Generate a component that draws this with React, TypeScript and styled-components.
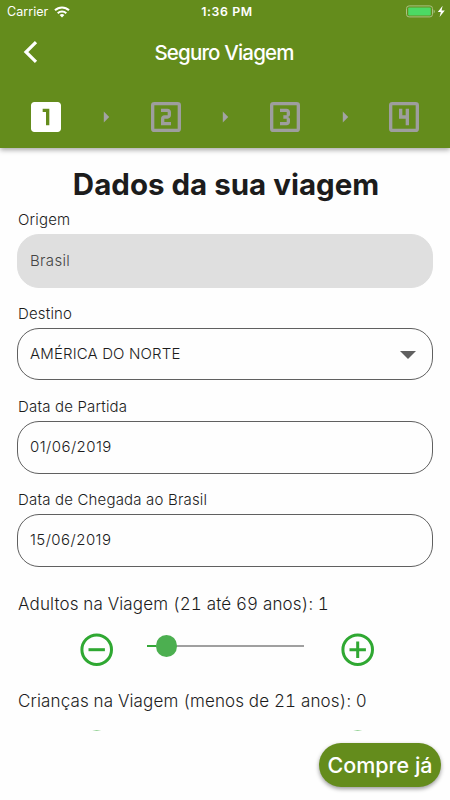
import React from "react";
import styled, { createGlobalStyle } from "styled-components";

const GREEN = "#648c1c";

const GlobalStyle = createGlobalStyle`
  *, *::before, *::after { box-sizing: border-box; }
  body { margin: 0; background: #fefefe; }
  svg { display: block; flex: none; }
`;

const Screen = styled.div`
  display: flex;
  flex-direction: column;
  width: 450px;
  height: 800px;
  overflow: hidden;
  background: #fefefe;
  color: #1c1c1c;
  font-family: Inter, "Liberation Sans", sans-serif;
`;

const Header = styled.header`
  flex: none;
  height: 148px;
  background: ${GREEN};
  color: #fff;
  box-shadow: 0 2px 5px rgba(0, 0, 0, 0.35);
  z-index: 1;
`;

const StatusBar = styled.div`
  display: grid;
  grid-template-columns: 1fr auto 1fr;
  align-items: center;
  height: 23px;
  padding: 0 5px 0 7px;
  font-size: 12.5px;
`;

const Carrier = styled.div`
  display: flex;
  align-items: center;
  gap: 6px;
  letter-spacing: 0.05px;
`;

const Clock = styled.div`
  padding-left: 2px;
  font-weight: 600;
  font-size: 12.3px;
  letter-spacing: 0.6px;
`;

const Power = styled.div`
  display: flex;
  justify-content: flex-end;
`;

const NavBar = styled.div`
  display: grid;
  grid-template-columns: 60px 1fr 60px;
  align-items: center;
  height: 58px;
`;

const BackButton = styled.button`
  display: flex;
  padding: 0 0 0 23px;
  border: 0;
  background: none;
  color: inherit;
`;

const NavTitle = styled.h1`
  margin: 0;
  padding-right: 2px;
  text-align: center;
  white-space: nowrap;
  font-size: 20.5px;
  font-weight: 500;
  letter-spacing: -0.83px;
`;

const Stepper = styled.div`
  display: grid;
  grid-template-columns: repeat(7, 59.7px);
  align-items: center;
  justify-items: center;
  height: 72px;
  padding: 0 0 0 16.3px;
`;

const Content = styled.main`
  flex: none;
  height: 583px;
  padding: 16px 17px 0;
  overflow: hidden;
`;

const Heading = styled.h2`
  margin: 0;
  height: 40px;
  padding-left: 2px;
  line-height: 40px;
  text-align: center;
  white-space: nowrap;
  font-size: 29.5px;
  font-weight: 700;
  letter-spacing: 0px;
`;

const Field = styled.div<{ $height: number; $gap: number }>`
  display: grid;
  grid-template-rows: 30px ${(p) => p.$height}px;
  margin-bottom: ${(p) => p.$gap}px;
`;

const Label = styled.label`
  padding-left: 1px;
  line-height: 31px;
  font-size: 15px;
  font-weight: 300;
  letter-spacing: 0.18px;
  white-space: nowrap;
`;

const Input = styled.div<{ $disabled?: boolean; $spacing?: number }>`
  display: flex;
  align-items: center;
  justify-content: space-between;
  padding: 0 16px 2px 12px;
  border: 1px solid ${(p) => (p.$disabled ? "#dfdfdf" : "#606060")};
  border-radius: 22px;
  background: ${(p) => (p.$disabled ? "#dfdfdf" : "transparent")};
  color: ${(p) => (p.$disabled ? "#444" : "#1c1c1c")};
  font-size: 15px;
  font-weight: 300;
  letter-spacing: ${(p) => p.$spacing ?? 0.15}px;
`;

const SelectArrow = styled.svg`
  margin-top: 3px;
`;

const Counter = styled.section`
  height: 97px;
`;

const CounterLabel = styled.div`
  height: 24px;
  padding-left: 1px;
  line-height: 24px;
  font-size: 17px;
  font-weight: 300;
  letter-spacing: 0.14px;
  font-variant-numeric: tabular-nums;
  white-space: nowrap;
`;

const CounterControls = styled.div`
  display: grid;
  grid-template-columns: 33px 157px 33px;
  column-gap: 34px;
  align-items: center;
  height: 33px;
  margin: 17px 59px 0 63px;
`;

const RoundButton = styled.button`
  display: flex;
  padding: 0;
  border: 0;
  background: none;
  &:last-child { margin-left: 3px; }
`;

const Track = styled.div`
  display: flex;
  align-items: center;
  height: 22px;
  margin-top: -7px;
`;

const Filled = styled.div`
  width: 8.5px;
  height: 2px;
  background: #35a838;
`;

const Thumb = styled.div`
  width: 21.5px;
  height: 21.5px;
  border-radius: 50%;
  background: #4caf50;
`;

const Rest = styled.div`
  flex: 1;
  height: 2px;
  background: #a0a0a0;
`;

const Footer = styled.footer`
  display: flex;
  justify-content: flex-end;
  padding: 12px 9px 0;
`;

const BuyButton = styled.button`
  width: 122px;
  height: 44px;
  padding: 0;
  border: 0;
  border-radius: 22px;
  background: ${GREEN};
  color: #fff;
  box-shadow: 0 2px 4px rgba(0, 0, 0, 0.4);
  font-family: inherit;
  font-size: 21.5px;
  font-weight: 500;
  letter-spacing: 0px;
  white-space: nowrap;
`;

const digits: Record<number, string> = {
  2: "M15 11c0 1.11-.9 2-2 2h-2v2h4v2H9v-4c0-1.11.9-2 2-2h2V9H9V7h4c1.1 0 2 .89 2 2v2z",
  3: "M15 10.5V9c0-1.11-.9-2-2-2H9v2h4v2h-2v2h2v2H9v2h4c1.1 0 2-.89 2-2v-1.5c0-.83-.67-1.5-1.5-1.5.83 0 1.5-.67 1.5-1.5z",
  4: "M9 7h2v4h2V7h2v10h-2v-4H9V7z",
};

const StepIcon = ({ step }: { step: number }) => (
  <svg width="40" height="40" viewBox="0 0 24 24" fill={step === 1 ? "#fff" : "#9e9e9e"}>
    {step === 1 ? (
      <path d="M19 3H5c-1.1 0-2 .9-2 2v14c0 1.1.9 2 2 2h14c1.1 0 2-.9 2-2V5c0-1.1-.9-2-2-2zm-5 14h-2V9h-2V7h4v10z" />
    ) : (
      <>
        <rect x="4" y="4" width="16" height="16" rx="1" fill="none" stroke="#9e9e9e" strokeWidth="2" />
        <path d={digits[step]} />
      </>
    )}
  </svg>
);

const StepArrow = () => (
  <svg width="26" height="26" viewBox="0 0 24 24" fill="#a3a3a3">
    <path d="M10 17l5-5-5-5v10z" />
  </svg>
);

const CircleIcon = ({ plus }: { plus?: boolean }) => (
  <svg width="33" height="33" viewBox="0 0 33 33" fill="none" stroke="#2fa832" strokeWidth="3">
    <circle cx="16.7" cy="16.7" r="14.8" />
    <path d={plus ? "M8.5 16.7h16.4M16.7 8.5v16.4" : "M8.5 16.7h16.4"} />
  </svg>
);

const TravellerCounter = ({ label, value }: { label: string; value: number }) => (
  <Counter>
    <CounterLabel>{`${label}: ${value}`}</CounterLabel>
    <CounterControls>
      <RoundButton aria-label="Diminuir">
        <CircleIcon />
      </RoundButton>
      <Track>
        {value > 0 && <Filled />}
        <Thumb />
        <Rest />
      </Track>
      <RoundButton aria-label="Aumentar">
        <CircleIcon plus />
      </RoundButton>
    </CounterControls>
  </Counter>
);

export default function App() {
  return (
    <Screen>
      <GlobalStyle />
      <Header>
        <StatusBar>
          <Carrier>
            Carrier
            <svg width="16" height="12" viewBox="0 0 16 12" fill="none" stroke="#fff" strokeWidth="2">
              <path d="M1 4.3a10 10 0 0 1 14 0" />
              <path d="M3.7 7.2a6.2 6.2 0 0 1 8.6 0" />
              <path d="M8 11.6 5.6 9.1a3.5 3.5 0 0 1 4.8 0z" fill="#fff" stroke="none" />
            </svg>
          </Carrier>
          <Clock>1:36 PM</Clock>
          <Power>
            <svg width="39" height="13" viewBox="0 0 39 13">
              <rect x=".5" y=".9" width="26" height="11" rx="2.6" fill="none" stroke="#a9c281" />
              <rect x="2.2" y="2.4" width="22.6" height="8" rx="1.2" fill="#4cd964" />
              <path d="M27.6 4.5a2.3 2.3 0 0 1 0 4z" fill="#a9c281" />
              <path d="M36.6.8 31.8 7h3l-1.2 5L38.8 5.5h-3.2z" fill="#fff" />
            </svg>
          </Power>
        </StatusBar>
        <NavBar>
          <BackButton aria-label="Voltar">
            <svg width="15" height="22" viewBox="0 0 15 22" fill="none" stroke="#fff" strokeWidth="3.2">
              <path d="M13 1.2 3 11l10 9.8" />
            </svg>
          </BackButton>
          <NavTitle>Seguro Viagem</NavTitle>
        </NavBar>
        <Stepper>
          <StepIcon step={1} />
          <StepArrow />
          <StepIcon step={2} />
          <StepArrow />
          <StepIcon step={3} />
          <StepArrow />
          <StepIcon step={4} />
        </Stepper>
      </Header>
      <Content>
        <Heading>Dados da sua viagem</Heading>
        <Field $height={54} $gap={10}>
          <Label>Origem</Label>
          <Input $disabled $spacing={0.35}>Brasil</Input>
        </Field>
        <Field $height={52} $gap={11}>
          <Label>Destino</Label>
          <Input>
            AMÉRICA DO NORTE
            <SelectArrow width="16" height="8" viewBox="0 0 16 8" fill="#606060">
              <path d="M0 0h16L8 8z" />
            </SelectArrow>
          </Input>
        </Field>
        <Field $height={53} $gap={10}>
          <Label>Data de Partida</Label>
          <Input $spacing={0.45}>01/06/2019</Input>
        </Field>
        <Field $height={53} $gap={25}>
          <Label>Data de Chegada ao Brasil</Label>
          <Input $spacing={0.45}>15/06/2019</Input>
        </Field>
        <TravellerCounter label="Adultos na Viagem (21 até 69 anos)" value={1} />
        <TravellerCounter label="Crianças na Viagem (menos de 21 anos)" value={0} />
      </Content>
      <Footer>
        <BuyButton>Compre já</BuyButton>
      </Footer>
    </Screen>
  );
}
